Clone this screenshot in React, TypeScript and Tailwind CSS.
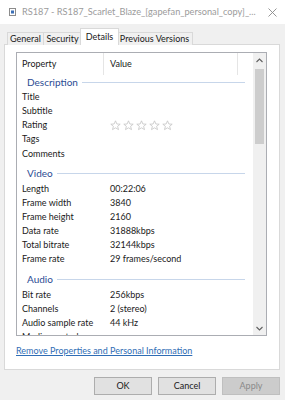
import React from "react";

const font = { fontFamily: 'Lato, "Noto Sans", sans-serif' };

type Row =
  | { kind: "group"; label: string; first?: boolean }
  | { kind: "item"; label: string; value?: string; stars?: boolean };

const rows: Row[] = [
  { kind: "group", label: "Description", first: true },
  { kind: "item", label: "Title" },
  { kind: "item", label: "Subtitle" },
  { kind: "item", label: "Rating", stars: true },
  { kind: "item", label: "Tags" },
  { kind: "item", label: "Comments" },
  { kind: "group", label: "Video" },
  { kind: "item", label: "Length", value: "00:22:06" },
  { kind: "item", label: "Frame width", value: "3840" },
  { kind: "item", label: "Frame height", value: "2160" },
  { kind: "item", label: "Data rate", value: "31888kbps" },
  { kind: "item", label: "Total bitrate", value: "32144kbps" },
  { kind: "item", label: "Frame rate", value: "29 frames/second" },
  { kind: "group", label: "Audio" },
  { kind: "item", label: "Bit rate", value: "256kbps" },
  { kind: "item", label: "Channels", value: "2 (stereo)" },
  { kind: "item", label: "Audio sample rate", value: "44 kHz" },
  { kind: "item", label: "Media created" },
];

const Stars = () => (
  <svg width="64" height="11" viewBox="0 0 64 11" className="block">
    {[0, 1, 2, 3, 4].map((i) => (
      <path
        key={i}
        transform={`translate(${i * 13},0)`}
        d="M5.5 0.8 L6.9 4 L10.2 4.2 L7.6 6.3 L8.5 9.6 L5.5 7.8 L2.5 9.6 L3.4 6.3 L0.8 4.2 L4.1 4 Z"
        fill="none"
        stroke="#c4c4c4"
        strokeWidth="0.8"
        strokeLinejoin="round"
      />
    ))}
  </svg>
);

const Tab = ({ label, w, active }: { label: string; w: string; active?: boolean }) =>
  active ? (
    <div
      className={`${w} h-[17px] -mx-[2px] relative z-10 bg-white border border-[#d9d9d9] border-b-0 flex items-start justify-center pt-[2px] text-[9px] leading-[12px] text-[#1a1a1a]`}
    >
      {label}
    </div>
  ) : (
    <div
      className={`${w} h-[13px] bg-[#f0f0f0] border border-[#d9d9d9] border-b-0 -ml-px first:ml-0 flex items-center justify-center text-[9px] leading-[12px] text-[#1a1a1a] whitespace-nowrap`}
    >
      {label}
    </div>
  );

const Btn = ({ label, disabled }: { label: string; disabled?: boolean }) => (
  <div
    className={
      disabled
        ? "w-[58px] h-[18px] bg-[#cccccc] border border-[#bfbfbf] flex items-center justify-center text-[9px] text-[#8a8a8a]"
        : "w-[58px] h-[18px] bg-[#e1e1e1] border border-[#adadad] flex items-center justify-center text-[9px] text-[#1a1a1a]"
    }
  >
    {label}
  </div>
);

export default function App() {
  return (
    <div className="w-[285px] h-[400px] bg-[#f0f0f0] flex flex-col overflow-hidden" style={font}>
      {/* title bar */}
      <div className="h-[24px] bg-white flex items-center shrink-0">
        <svg width="7" height="8" viewBox="0 0 7 8" className="ml-[9px]">
          <rect x="0.5" y="0.5" width="6" height="7" fill="#fff" stroke="#8c8c8c" />
          <rect x="2" y="2.5" width="3" height="3" fill="#3b6fb6" />
        </svg>
        <span className="ml-[6px] text-[9.2px] leading-[12px] text-[#9b9b9b] whitespace-nowrap">
          RS187 - RS187_Scarlet_Blaze_[gapefan_personal_copy]_...
        </span>
        <svg width="9" height="9" viewBox="0 0 9 9" className="ml-auto mr-[8px]">
          <path d="M0.5 0.5 L8.5 8.5 M8.5 0.5 L0.5 8.5" stroke="#8a8a8a" strokeWidth="0.9" />
        </svg>
      </div>

      {/* tabs */}
      <div className="h-[21px] pl-[7px] flex items-end shrink-0 -mb-px relative z-10">
        <Tab label="General" w="w-[37px]" />
        <Tab label="Security" w="w-[39px]" />
        <Tab label="Details" w="w-[39px]" active />
        <Tab label="Previous Versions" w="w-[77px]" />
      </div>

      {/* panel */}
      <div className="ml-[4px] w-[276px] h-[326px] bg-white border border-[#d9d9d9] flex flex-col shrink-0">
        <div className="ml-[11px] mt-[7px] w-[251px] h-[284px] border border-[#abadb3] flex overflow-hidden">
          <div className="flex-1 flex flex-col overflow-hidden">
            {/* header */}
            <div className="h-[22px] shrink-0 flex text-[9px] leading-[12px] text-[#1a1a1a]">
              <div className="w-[87px] border-r border-[#e5e5e5] pl-[5px] flex items-center">Property</div>
              <div className="w-[134px] border-r border-[#e5e5e5] pl-[6px] flex items-center">Value</div>
              <div className="flex-1" />
            </div>
            {rows.map((r, i) =>
              r.kind === "group" ? (
                <div
                  key={i}
                  className={`${r.first ? "h-[15px] pb-[1px]" : "h-[21px] pb-[2px]"} shrink-0 flex items-end pl-[10px] pr-[8px]`}
                >
                  <span className="text-[10px] leading-[13px] text-[#2b4b93]">{r.label}</span>
                  <div className="flex-1 h-px bg-[#c7d6ea] ml-[4px] mb-[6px]" />
                </div>
              ) : (
                <div key={i} className="h-[14.15px] shrink-0 flex items-center text-[9px] leading-[12px] text-[#1a1a1a]">
                  <div className="w-[87px] pl-[5px] whitespace-nowrap">{r.label}</div>
                  <div className="pl-[6px] whitespace-nowrap">{r.stars ? <Stars /> : r.value}</div>
                </div>
              )
            )}
          </div>
          {/* scrollbar */}
          <div className="w-[13px] bg-[#f0f0f0] flex flex-col shrink-0">
            <div className="h-[14px] flex items-center justify-center">
              <svg width="7" height="5" viewBox="0 0 7 5">
                <path d="M0.5 4 L3.5 1 L6.5 4" fill="none" stroke="#606060" strokeWidth="1.1" />
              </svg>
            </div>
            <div className="mt-[2px] mx-[2px] h-[75px] bg-[#cdcdcd]" />
            <div className="flex-1" />
            <div className="h-[14px] flex items-center justify-center">
              <svg width="7" height="5" viewBox="0 0 7 5">
                <path d="M0.5 1 L3.5 4 L6.5 1" fill="none" stroke="#606060" strokeWidth="1.1" />
              </svg>
            </div>
          </div>
        </div>
        <div className="ml-[11px] mt-[9px] text-[9px] leading-[12px] text-[#2f6db5] underline whitespace-nowrap">
          Remove Properties and Personal Information
        </div>
      </div>

      {/* buttons */}
      <div className="mt-[7px] pr-[5px] flex justify-end gap-[6px]">
        <Btn label="OK" />
        <Btn label="Cancel" />
        <Btn label="Apply" disabled />
      </div>
    </div>
  );
}
